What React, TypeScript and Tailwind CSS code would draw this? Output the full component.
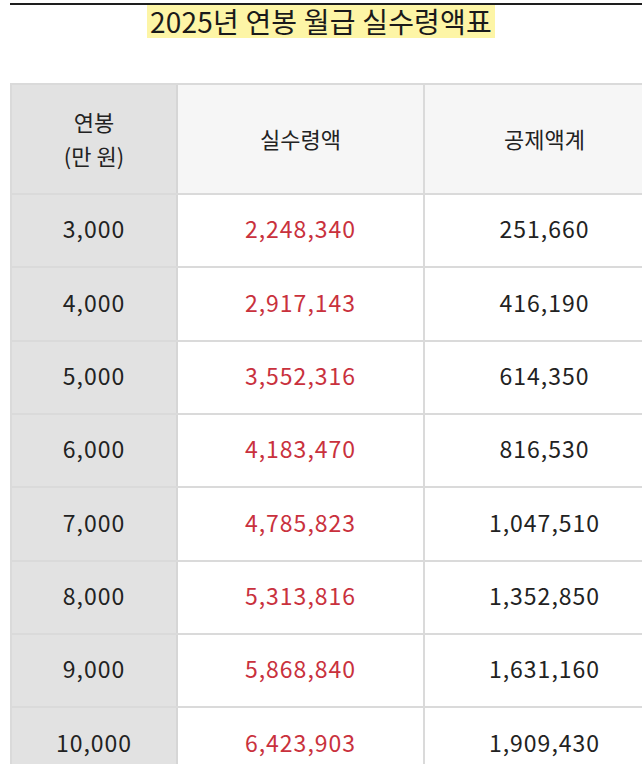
const ROWS = [
  ["3,000", "2,248,340", "251,660"],
  ["4,000", "2,917,143", "416,190"],
  ["5,000", "3,552,316", "614,350"],
  ["6,000", "4,183,470", "816,530"],
  ["7,000", "4,785,823", "1,047,510"],
  ["8,000", "5,313,816", "1,352,850"],
  ["9,000", "5,868,840", "1,631,160"],
  ["10,000", "6,423,903", "1,909,430"],
];

export default function App() {
  return (
    <div
      className="w-[642px] h-[764px] overflow-hidden bg-white text-[#222]"
      style={{ fontFamily: '"Noto Sans CJK KR", "Noto Sans", sans-serif' }}
    >
      {/* top rule */}
      <div className="ml-[10px] mt-[3px] h-[2px] bg-[#1e1e1e]" />

      {/* title */}
      <div className="flex justify-center">
        <h1 className="bg-[#fdf5a6] px-[3px] text-[28px] leading-[33px] tracking-[0.2px] text-[#1a1a1a]">
          2025년 연봉 월급 실수령액표
        </h1>
      </div>

      {/* table */}
      <div className="mt-[45px] ml-[10px] w-[654px] border-t-2 border-l-2 border-[#dadada]">
        <div className="grid grid-cols-[166px_247px_1fr] h-[110px] border-b-2 border-[#dadada] text-[22px]">
          <div className="flex flex-col items-center justify-center bg-[#e2e2e2] border-r-2 border-[#d6d6d6] leading-[34px] pb-[2px]">
            <span>연봉</span>
            <span>(만 원)</span>
          </div>
          <div className="flex items-center justify-center bg-[#f6f6f6] border-r-2 border-[#dadada] pb-[2px]">
            실수령액
          </div>
          <div className="flex items-center justify-center bg-[#f6f6f6] pb-[2px]">공제액계</div>
        </div>

        {ROWS.map((row, idx) => (
          <div
            key={idx}
            className="grid grid-cols-[166px_247px_1fr] h-[73.33px] border-b-2 border-[#dadada] text-[23px] tracking-[1px]"
          >
            <div className="flex items-center justify-center bg-[#e2e2e2] border-r-2 border-[#d6d6d6] pb-[4px]">
              {row[0]}
            </div>
            <div className="flex items-center justify-center border-r-2 border-[#dadada] text-[#c9313d] pb-[4px]">
              {row[1]}
            </div>
            <div className="flex items-center justify-center pb-[4px]">{row[2]}</div>
          </div>
        ))}
      </div>
    </div>
  );
}
